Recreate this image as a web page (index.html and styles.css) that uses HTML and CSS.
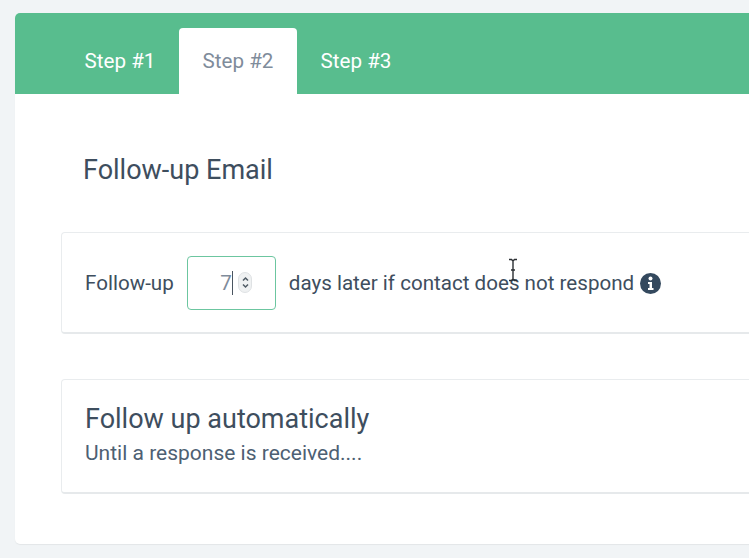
FILE: index.html
```html
<!DOCTYPE html>
<html lang="en">
<head>
<meta charset="utf-8">
<title>Follow-up Email</title>
<link rel="stylesheet" href="styles.css">
</head>
<body>
<main class="card">
  <nav class="tabs">
    <a class="tab">Step #1</a>
    <a class="tab active">Step #2</a>
    <a class="tab">Step #3</a>
  </nav>
  <section class="content">
    <h1 class="title">Follow-up Email</h1>
    <div class="panel row">
      <span>Follow-up</span>
      <span class="input">
        <span class="value">7</span>
        <span class="caret"></span>
        <span class="spinner">
          <svg width="9" height="15" viewBox="0 0 9 15"><path d="M2 5.500 4.500 3 7 5.500M2 9.500 4.500 12 7 9.500" fill="none" stroke="#4f5b65" stroke-width="1.500"/></svg>
        </span>
      </span>
      <span class="after">days later if contact does not respond</span>
      <svg class="info" width="21" height="21" viewBox="0 0 21 21"><circle cx="10.500" cy="10.500" r="10.500" fill="#34495e"/><circle cx="10.500" cy="5.500" r="2" fill="#fff"/><path d="M8 9h4v6h1.500v2h-5.500v-2h1.500v-4H8z" fill="#fff"/></svg>
      <svg class="cursor" width="12" height="24" viewBox="0 0 12 24"><path d="M2 1.500h2.500L6 3l1.500-1.500H10M6 3v18M2 22.500h2.500L6 21l1.500 1.500H10M4 12h4" fill="none" stroke="#2b2f33" stroke-width="1.400"/></svg>
    </div>
    <div class="panel auto">
      <h2 class="auto-title">Follow up automatically</h2>
      <p class="auto-text">Until a response is received....</p>
    </div>
  </section>
</main>
</body>
</html>
```
FILE: styles.css
```css
html, body {
  margin: 0;
  height: 100%;
  overflow: hidden;
}
body {
  background: #f1f4f6;
  padding: 13px 0 0 15px;
  box-sizing: border-box;
  font-family: Roboto, "Liberation Sans", sans-serif;
  color: #3e4e5e;
}
.card {
  width: 900px;
  height: 531px;
  background: #fff;
  border-radius: 5px;
  box-shadow: 0 1px 1px rgba(0, 0, 0, .06);
  overflow: hidden;
}
.tabs {
  display: flex;
  align-items: flex-end;
  height: 81px;
  padding-left: 46px;
  background: #58bd8e;
}
.tab {
  box-sizing: border-box;
  width: 118px;
  height: 66px;
  padding-top: 21px;
  text-align: center;
  font-size: 20.600px;
  line-height: 24px;
  color: #fff;
}
.active {
  background: #fff;
  color: #7f8c9b;
  border-radius: 4px 4px 0 0;
}
.content {
  padding: 60px 0 0 46px;
}
.title {
  margin: 0 0 46px 22px;
  font-size: 27px;
  line-height: 32px;
  font-weight: 400;
}
.panel {
  box-sizing: border-box;
  background: #fff;
  border: 1px solid #e9ecee;
  border-bottom: 2px solid #e6e9eb;
  border-radius: 4px;
}
.row {
  position: relative;
  display: flex;
  align-items: center;
  height: 102px;
  margin-bottom: 45px;
  padding: 1px 0 0 23px;
  font-size: 20.600px;
}
.input {
  box-sizing: border-box;
  display: flex;
  align-items: center;
  justify-content: flex-end;
  width: 89px;
  height: 54px;
  margin-left: 13px;
  padding-right: 42px;
  border: 1.500px solid #6cc6a0;
  border-radius: 4px;
  color: #7f8c9b;
}
.value {
  line-height: 24px;
}
.caret {
  width: 1px;
  height: 24px;
  background: #4a5560;
}
.spinner {
  box-sizing: border-box;
  position: absolute;
  left: 176px;
  top: 39px;
  display: flex;
  align-items: center;
  justify-content: center;
  width: 14px;
  height: 21px;
  background: #eff1f2;
  border: 1px solid #dfe2e4;
  border-radius: 7px;
}
.after {
  margin-left: 13px;
}
.info {
  margin-left: 6px;
}
.cursor {
  position: absolute;
  left: 445px;
  top: 25px;
}
.auto {
  height: 115px;
  padding: 22px 0 0 23px;
}
.auto-title {
  margin: 0;
  font-size: 27px;
  line-height: 35px;
  font-weight: 400;
}
.auto-text {
  margin: 0;
  font-size: 21px;
  line-height: 32px;
  color: #4d6073;
}
```
